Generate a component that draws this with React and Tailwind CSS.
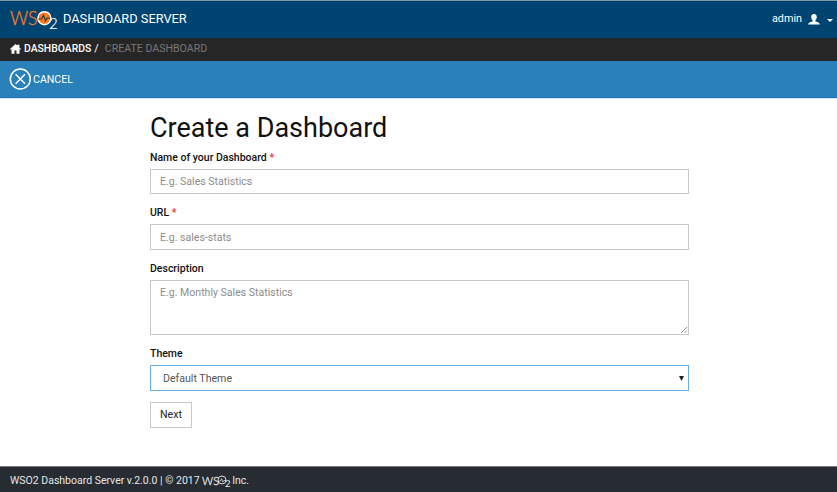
import React from "react";

function Logo() {
  return (
    <svg width="50" height="23" viewBox="0 0 50 23" className="shrink-0 overflow-visible font-['Lato',sans-serif]">
      <text x="0" y="17" textLength="27.600" lengthAdjust="spacingAndGlyphs" fill="#f47b20" stroke="#f47b20" strokeWidth="0.35" fontSize="18.600" fontWeight="300">WS</text>
      <circle cx="34.400" cy="10.200" r="6.500" fill="#f47b20" stroke="#fff" strokeWidth="1.400" />
      <path d="M28.500 11h3l2-3.700 2 5.500 1.600-2.800h3" fill="none" stroke="#34302d" strokeWidth="1.100" />
      <text x="39" y="21" fontSize="15" fontWeight="300" fill="#fff" stroke="#fff" strokeWidth="0.2">2</text>
    </svg>
  );
}

function FooterLogo() {
  return (
    <svg width="29" height="14" viewBox="0 0 29 14" className="shrink-0 overflow-visible font-['Lato',sans-serif]" fill="#e4e6e7">
      <text x="0" y="10.500" fontSize="12.500" fontWeight="300" stroke="#e4e6e7" strokeWidth="0.35" textLength="17" lengthAdjust="spacingAndGlyphs">WS</text>
      <circle cx="20" cy="6" r="4" fill="none" stroke="#e4e6e7" strokeWidth="0.9" />
      <path d="M16 7h2.400l1.200-2.400 1.200 3.600 1-1.700h2" fill="none" stroke="#e4e6e7" strokeWidth="0.7" />
      <text x="23" y="13" fontSize="9.500">2</text>
    </svg>
  );
}

const field = "block w-full border border-[#c8c8c8] bg-white px-[9px] text-[10.55px] text-[#555] placeholder:text-[#8c8c8c] placeholder:opacity-100 outline-none";

function Label({ children, required }) {
  return (
    <label className="block h-[12px] text-[10.5px] leading-[12px] font-medium text-[#111]">
      {children}
      {required && <span className="font-bold text-[#e53a2c]"> *</span>}
    </label>
  );
}

export default function App() {
  return (
    <div className="flex h-[492px] w-[837px] flex-col overflow-hidden bg-white font-['Roboto',sans-serif]">
      <header className="flex h-[38px] shrink-0 items-center border-t border-[#8496a5] bg-[#004471] pr-[4px] pl-[10px] text-white">
        <Logo />
        <h1 className="ml-[3px] pb-[2px] text-[12.8px] leading-4">DASHBOARD SERVER</h1>
        <div className="ml-auto flex items-center">
          <span className="pb-[1px] text-[10.8px]">admin</span>
          <svg width="12" height="11" viewBox="0 0 12 11" fill="#fff" className="ml-[6px]">
            <path d="M6 0C4.200 0 3.200 1.200 3.200 2.900c0 1.500.7 2.700 1.400 3.400v1C3.300 8 .2 8.300.2 10.600h11.600c0-2.300-3.100-2.600-4.400-3.300v-1c.7-.7 1.400-1.900 1.400-3.400C8.800 1.200 7.800 0 6 0z" />
          </svg>
          <span className="mt-[1px] ml-[7px] border-x-[3px] border-t-[3px] border-x-transparent border-t-white" />
        </div>
      </header>
      <nav className="flex h-[23px] shrink-0 items-center bg-[#262626] pb-[1px] pl-[10px] text-[10.6px] text-white">
        <svg width="11" height="10" viewBox="0 0 11 10" fill="#fff">
          <path d="M5.500 0L0 5l.6.7.9-.7v4.700h3V6.500h2v3.200h3V5l.9.700.6-.7-1.600-1.500V.8H7.200v.8z" />
        </svg>
        <span className="ml-[3px] text-[10.4px] font-medium">DASHBOARDS</span>
        <span className="ml-[3px]">/</span>
        <span className="ml-[6px] text-[#777]">CREATE DASHBOARD</span>
      </nav>
      <div className="flex h-[37px] shrink-0 items-center border-b border-[#1d70aa] bg-[#2a80b9] pl-[9px] text-[10.6px] text-white">
        <svg width="22" height="22" viewBox="0 0 22 22" fill="none" stroke="#fff">
          <circle cx="11.300" cy="11" r="10" strokeWidth="1.500" />
          <path d="M6.600 6.300l9.400 9.400M16 6.300l-9.400 9.400" strokeWidth="1.400" />
        </svg>
        <span className="mt-[1px] ml-[2px]">CANCEL</span>
      </div>
      <div className="h-px shrink-0 bg-[#d8e9f5]" />
      <main className="ml-[150px] w-[539px] flex-1">
        <h2 className="mt-[12px] h-[34px] text-[27px] leading-[34px] text-[#111]">Create a Dashboard</h2>
        <div className="mt-[7px]">
          <Label required>Name of your Dashboard</Label>
          <input className={field + " mt-[5px] h-[25px]"} placeholder="E.g. Sales Statistics" />
        </div>
        <div className="mt-[13px]">
          <Label required>URL</Label>
          <input className={field + " mt-[5px] h-[26px]"} placeholder="E.g. sales-stats" />
        </div>
        <div className="mt-[13px]">
          <Label>Description</Label>
          <div className="relative mt-[5px]">
            <textarea className={field + " h-[55px] resize-none py-[5px] leading-[14px]"} placeholder="E.g. Monthly Sales Statistics" />
            <svg width="8" height="8" viewBox="0 0 8 8" className="absolute right-[1px] bottom-[1px]" stroke="#777" strokeWidth="0.8">
              <path d="M1 7L7 1M4.500 7L7 4.500" />
            </svg>
          </div>
        </div>
        <div className="mt-[13px]">
          <Label>Theme</Label>
          <button className="mt-[5px] flex h-[26px] w-full items-center justify-between border border-[#66afe9] bg-white pt-[1px] pr-[4px] pl-[12px] text-[10.6px] text-[#555]">
            <span>Default Theme</span>
            <svg width="5" height="5" viewBox="0 0 5 5" fill="#222" className="mb-[1px]"><path d="M0 0h5L2.500 5z" /></svg>
          </button>
        </div>
        <button className="mt-[11px] h-[26px] w-[42px] border border-[#c8c8c8] bg-white text-[10.6px] text-[#222]">Next</button>
      </main>
      <footer className="flex h-[26px] shrink-0 items-center border-t border-[#77797b] bg-[#262c31] pt-[3px] pl-[10px] text-[10.5px] text-[#e4e6e7]">
        <span>WSO2 Dashboard Server v.2.0.0 | © 2017</span>
        <span className="ml-[2px] flex pb-[1px]"><FooterLogo /></span>
        <span className="ml-[1.5px]">Inc.</span>
      </footer>
    </div>
  );
}
